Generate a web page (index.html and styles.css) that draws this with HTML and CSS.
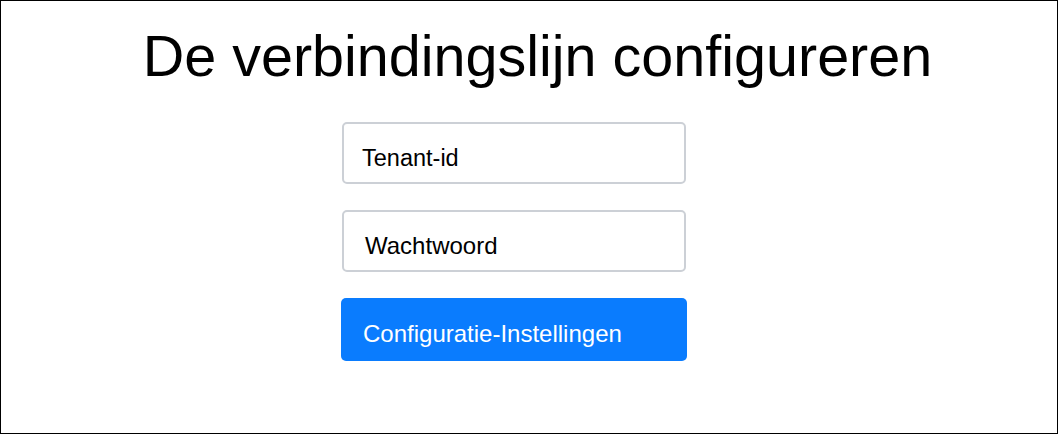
FILE: index.html
```html
<!DOCTYPE html>
<html lang="nl">
<head>
<meta charset="utf-8">
<title>De verbindingslijn configureren</title>
<link rel="stylesheet" href="styles.css">
</head>
<body>
<div class="frame">
  <h1 class="title">De verbindingslijn configureren</h1>
  <form class="form">
    <div class="field"><span class="field-text">Tenant-id</span></div>
    <div class="field"><span class="field-text field-text--w">Wachtwoord</span></div>
    <div class="button">Configuratie-Instellingen</div>
  </form>
</div>
</body>
</html>
```
FILE: styles.css
```css
html, body {
  margin: 0;
  padding: 0;
  background: #ffffff;
}
.frame {
  box-sizing: border-box;
  width: 1058px;
  height: 434px;
  border: 1px solid #000000;
  font-family: "Liberation Sans", Arial, sans-serif;
  color: #000000;
}
.title {
  margin: 22px 0 0 0;
  padding-left: 17px;
  text-align: center;
  font-size: 57.5px;
  font-weight: normal;
  line-height: 66px;
}
.form {
  margin: 33px 0 0 340px;
  width: 346px;
  display: flex;
  flex-direction: column;
  gap: 26px;
}
.field {
  box-sizing: border-box;
  margin-left: 1px;
  width: 344px;
  height: 62px;
  border: 2px solid #ccd0d6;
  border-radius: 5px;
  padding: 21px 0 0 18px;
  font-size: 23.5px;
  line-height: 26px;
}
.field-text--w {
  margin-left: 3px;
  font-size: 24px;
}
.button {
  box-sizing: border-box;
  width: 346px;
  height: 63px;
  background: #0a7cfe;
  border-radius: 5px;
  color: #ffffff;
  font-size: 24px;
  line-height: 26px;
  padding: 23px 0 0 22px;
}
```
